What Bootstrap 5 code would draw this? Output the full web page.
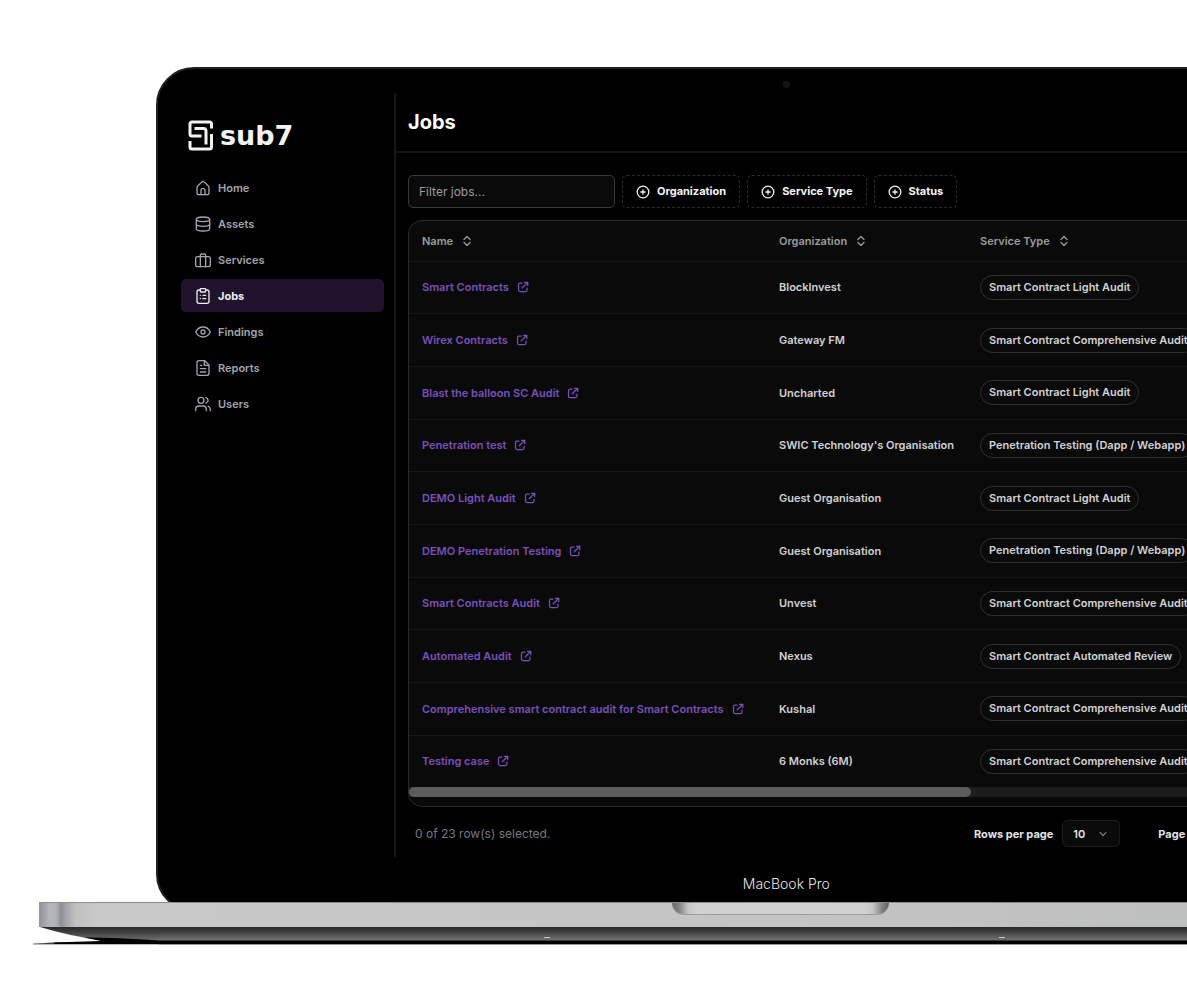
<!DOCTYPE html>
<html lang="en">
<head>
<meta charset="utf-8">
<meta name="viewport" content="width=device-width, initial-scale=1">
<title>sub7 – Jobs</title>
<link href="https://cdn.jsdelivr.net/npm/bootstrap@5.3.0/dist/css/bootstrap.min.css" rel="stylesheet">
<style>
  body { background: #fff; font-family: Inter, "Liberation Sans", sans-serif; font-size: 12px; line-height: 16px; color: #e4e4e7; overflow-x: hidden; }
  .stage { padding: 67px 0 39px 39px; overflow: hidden; }
  .laptop { width: 130.2%; }
  .screen { margin: 0 117px -10px; background: #000; border: 2px solid #1f2022; border-radius: 38px; }
  .bezel { height: 24px; padding-top: 12px; }
  .camera { width: 7px; height: 7px; border-radius: 50%; background: #14141b; }
  .app-shell { height: 764px; }
  .side { width: 238px; padding: 27px 10px 0 23px; border-right: 2px solid #151515; }
  .brand { gap: 7px; padding-left: 7px; margin-bottom: 20px; color: #f2f2f2; text-decoration: none; }
  .wordmark { font: 700 27px/31px "DejaVu Sans", sans-serif; }
  .side-nav { gap: 3px; }
  .side-nav .nav-link { display: flex; align-items: center; gap: 7px; height: 33px; padding: 0 14px; color: #a3a4ad; font-size: 11px; font-weight: 600; border-radius: 5px; }
  .side-nav .nav-link.active { background: #20132c; color: #ededf0; font-weight: 700; }
  .ico { fill: none; stroke: currentColor; stroke-width: 2; stroke-linecap: round; stroke-linejoin: round; flex: none; }
  .ico-thin { stroke-width: 1.3; }
  .ico-open { stroke-width: 2.5; }
  .top-bar { height: 60px; padding: 0 12px; border-bottom: 2px solid #151515; }
  .top-bar h1 { font-size: 20px; line-height: 28px; font-weight: 700; color: #fff; }
  .body-pad { padding: 22px 12px 0; }
  .tools { gap: 7px; margin-bottom: 12px; }
  .filter { width: 207px; height: 33px; font-size: 12px; padding: 0 10px; background: #0a0a0a; border: 1px solid #3a3a3a; border-radius: 5px; color: #e4e4e7; }
  .filter::placeholder { color: #9b9ba3; }
  .filter:focus { background: #0a0a0a; color: #fff; }
  .facet { display: flex; align-items: center; gap: 7px; height: 33px; padding: 0 13px; font-size: 11px; font-weight: 700; color: #f4f4f5; border: 1px dashed #2b2b2b; border-radius: 5px; }
  .facet:hover { color: #fff; background: #111; border-color: #444; }
  .panel { background: #0a0a0a; border: 1px solid #2b2b2b; border-radius: 14px; overflow: hidden; padding-bottom: 9px; }
  .jobs { table-layout: fixed; width: 100%; height: 566px; font-size: 11px; }
  .jobs .c-name { width: 357px; }
  .jobs .c-org { width: 202px; }
  .jobs th { height: 40px; padding: 0 13px; border-bottom: 1px solid #171717; }
  .jobs td { padding: 0 13px; font-weight: 600; color: #d2d2d4; border-bottom: 1px solid #171717; white-space: nowrap; }
  .jobs tr > :nth-child(3) { padding-left: 12px; }
  .jobs tr:last-child td { border-bottom: 0; }
  .jobs .sorter { font-weight: 600; font-size: 11px; line-height: 16px; color: #9c9c9c; gap: 8px; }
  .job-link { display: inline-flex; align-items: center; gap: 8px; color: #7b50bc; text-decoration: none; }
  .job-link:hover { color: #9a70dd; }
  .pill { display: inline-block; padding: 3px 8px; line-height: 17px; border: 1px solid #303030; border-radius: 13px; }
  .track { height: 10px; background: #1d1d1d; }
  .thumb { width: 562px; height: 10px; border-radius: 5px; background: #5c5c5c; }
  .foot { padding: 13px 7px 0; }
  .foot .picked { width: 559px; color: #777986; }
  .foot .strong { font-size: 11px; font-weight: 700; color: #e4e4e7; }
  .rows-pick { width: 58px; height: 27px; margin: 0 38px 0 9px; padding: 0 10px; font-size: 11px; font-weight: 600; line-height: 16px; color: #e4e4e7; background-color: #0a0a0a; border: 1px solid #1c1c1c; border-radius: 5px; background-position: right 10px center; background-size: 12px 12px;
    background-image: url("data:image/svg+xml,%3csvg xmlns='http://www.w3.org/2000/svg' viewBox='0 0 16 16'%3e%3cpath fill='none' stroke='%23999' stroke-width='1.4' stroke-linecap='round' d='m4 6 4 4 4-4'/%3e%3c/svg%3e"); }
  .chin { height: 53px; padding-top: 17px; font-size: 14px; line-height: 20px; font-weight: 300; color: #e6e6e6; }
  .deck { position: relative; height: 25px; padding-right: 12px; border-top: 1px solid #8b8c90; border-left: 1px solid #97989d;
    background: linear-gradient(90deg, #93959b 0, #b5b8bb 10px, #b0b2b6 16px, #8e9096 21px, #a5a7ab 27px, #c2c2c3 36px, #c8c8c8 60px, #c4c4c4 50%, #b9bbbb 100%); }
  .notch { width: 217px; height: 12px; border-radius: 0 0 16px 16px; border-bottom: 1px solid #9c9fa0; background: linear-gradient(90deg, #66676a 0, #808284 7px, #c4c6c4 16px, #d0d2cf 24px, #d0d2cf 193px, #c4c6c4 201px, #808284 210px, #5f6063 100%); }
  .under { height: 18px; }
  .under svg { width: 120px; height: 18px; overflow: visible; flex: none; }
  .under-fill { background: linear-gradient(#2a2a2c 0, #3a3a3b 4px, #717172 13px, #000 14px, #000 17px, #9a9a9a 17px, #9a9a9a 18px); }
  .foot-mark { width: 6px; height: 1px; margin-top: 10px; background: #c9c9c9; }
  .fm-a { margin-left: 385px; }
  .fm-b { margin-left: 449px; }
</style>
</head>
<body>
<svg width="0" height="0" class="position-absolute" aria-hidden="true">
  <symbol id="i-open" viewBox="0 0 24 24"><path d="M20 14v4a3 3 0 0 1-3 3H6a3 3 0 0 1-3-3V7a3 3 0 0 1 3-3h4"/><path d="M15 2.500h6.500V9M10.500 13.500 21 3"/></symbol>
  <symbol id="i-sort" viewBox="0 0 12 12"><path d="M3 4.500 6 1.500l3 3M3 7.500l3 3 3-3"/></symbol>
  <symbol id="i-plus" viewBox="0 0 14 14"><circle cx="7" cy="7" r="5.800"/><path d="M7 4.800v4.400M4.800 7h4.400"/></symbol>
</svg>
<div class="stage">
<div class="laptop">
  <div class="screen">
    <div class="bezel d-flex justify-content-center"><span class="camera"></span></div>
    <div class="app-shell d-flex">
      <aside class="side flex-shrink-0">
        <a class="brand d-flex align-items-center" href="#">
          <svg width="25" height="31" viewBox="0 0 25 31" fill="none" stroke="currentColor" stroke-width="3"><path d="M23.500 8.500V4q0-2-2-2H4Q2 2 2 4v10q0 2 2 2h9.500"/><path d="M6.500 8.500h9q2.500 0 2.500 2.500v13.500"/><path d="M23.500 14v13q0 2-2 2H4q-2 0-2-2v-6"/></svg>
          <span class="wordmark">sub7</span>
        </a>
        <nav class="side-nav nav flex-column">
          <a class="nav-link" href="#"><svg class="ico" width="16" height="16" viewBox="0 0 24 24"><path d="M5 8 10.500 2.800q1.500-1.300 3 0L19 8q2 1.600 2 4v7a3 3 0 0 1-3 3H6a3 3 0 0 1-3-3v-7q0-2.400 2-4z"/><path d="M9 22v-7a2 2 0 0 1 2-2h2a2 2 0 0 1 2 2v7"/></svg>Home</a>
          <a class="nav-link" href="#"><svg class="ico" width="16" height="16" viewBox="0 0 24 24"><ellipse cx="12" cy="5" rx="10" ry="3.500"/><path d="M2 5v14a10 3.500 0 0 0 20 0V5"/><path d="M2 12a10 3.500 0 0 0 20 0"/></svg>Assets</a>
          <a class="nav-link" href="#"><svg class="ico" width="16" height="16" viewBox="0 0 24 24"><rect x="1" y="7" width="22" height="15" rx="3"/><path d="M16 22V5a2 2 0 0 0-2-2h-4a2 2 0 0 0-2 2v17"/></svg>Services</a>
          <a class="nav-link active" aria-current="page" href="#"><svg class="ico" width="16" height="16" viewBox="0 0 24 24"><rect x="8" y="1" width="8" height="5" rx="1"/><path d="M16 3h2a3 3 0 0 1 3 3v14a3 3 0 0 1-3 3H6a3 3 0 0 1-3-3V6a3 3 0 0 1 3-3h2M12 11h4M12 16h4M8 11h.01M8 16h.01"/></svg>Jobs</a>
          <a class="nav-link" href="#"><svg class="ico" width="16" height="16" viewBox="0 0 24 24"><path d="M1 12s4-7.500 11-7.500S23 12 23 12s-4 7.500-11 7.500S1 12 1 12Z"/><circle cx="12" cy="12" r="3"/></svg>Findings</a>
          <a class="nav-link" href="#"><svg class="ico" width="16" height="16" viewBox="0 0 24 24"><path d="M14.500 1H6a3 3 0 0 0-3 3v16a3 3 0 0 0 3 3h12a3 3 0 0 0 3-3V7.500L14.500 1z"/><path d="M14 2v6h6M16 13H8M16 18H8M10 8H8"/></svg>Reports</a>
          <a class="nav-link" href="#"><svg class="ico" width="16" height="16" viewBox="0 0 24 24"><path d="M17 22v-2a5 5 0 0 0-5-5H6a5 5 0 0 0-5 5v2"/><circle cx="9" cy="6.500" r="4.500"/><path d="M23 22v-2a5 5 0 0 0-3.500-4.700M16.500 2.300a4.500 4.500 0 0 1 0 8.500"/></svg>Users</a>
        </nav>
      </aside>
      <main class="flex-grow-1">
        <header class="top-bar d-flex align-items-center"><h1 class="m-0">Jobs</h1></header>
        <div class="body-pad">
          <div class="tools d-flex">
            <input class="filter form-control" type="text" placeholder="Filter jobs..." aria-label="Filter jobs">
            <button class="facet btn" type="button"><svg class="ico ico-thin" width="14" height="14"><use href="#i-plus"/></svg>Organization</button>
            <button class="facet btn" type="button"><svg class="ico ico-thin" width="14" height="14"><use href="#i-plus"/></svg>Service Type</button>
            <button class="facet btn" type="button"><svg class="ico ico-thin" width="14" height="14"><use href="#i-plus"/></svg>Status</button>
          </div>
          <div class="panel">
            <table class="jobs">
              <thead><tr>
                <th class="c-name" scope="col"><button class="sorter btn p-0 border-0 d-flex align-items-center" type="button">Name<svg class="ico ico-thin" width="12" height="12"><use href="#i-sort"/></svg></button></th>
                <th class="c-org" scope="col"><button class="sorter btn p-0 border-0 d-flex align-items-center" type="button">Organization<svg class="ico ico-thin" width="12" height="12"><use href="#i-sort"/></svg></button></th>
                <th scope="col"><button class="sorter btn p-0 border-0 d-flex align-items-center" type="button">Service Type<svg class="ico ico-thin" width="12" height="12"><use href="#i-sort"/></svg></button></th>
              </tr></thead>
              <tbody>
                <tr><td><a class="job-link" href="#">Smart Contracts<svg class="ico ico-open" width="12" height="12"><use href="#i-open"/></svg></a></td><td>BlockInvest</td><td><span class="pill">Smart Contract Light Audit</span></td></tr>
                <tr><td><a class="job-link" href="#">Wirex Contracts<svg class="ico ico-open" width="12" height="12"><use href="#i-open"/></svg></a></td><td>Gateway FM</td><td><span class="pill">Smart Contract Comprehensive Audit</span></td></tr>
                <tr><td><a class="job-link" href="#">Blast the balloon SC Audit<svg class="ico ico-open" width="12" height="12"><use href="#i-open"/></svg></a></td><td>Uncharted</td><td><span class="pill">Smart Contract Light Audit</span></td></tr>
                <tr><td><a class="job-link" href="#">Penetration test<svg class="ico ico-open" width="12" height="12"><use href="#i-open"/></svg></a></td><td>SWIC Technology's Organisation</td><td><span class="pill">Penetration Testing (Dapp / Webapp)</span></td></tr>
                <tr><td><a class="job-link" href="#">DEMO Light Audit<svg class="ico ico-open" width="12" height="12"><use href="#i-open"/></svg></a></td><td>Guest Organisation</td><td><span class="pill">Smart Contract Light Audit</span></td></tr>
                <tr><td><a class="job-link" href="#">DEMO Penetration Testing<svg class="ico ico-open" width="12" height="12"><use href="#i-open"/></svg></a></td><td>Guest Organisation</td><td><span class="pill">Penetration Testing (Dapp / Webapp)</span></td></tr>
                <tr><td><a class="job-link" href="#">Smart Contracts Audit<svg class="ico ico-open" width="12" height="12"><use href="#i-open"/></svg></a></td><td>Unvest</td><td><span class="pill">Smart Contract Comprehensive Audit</span></td></tr>
                <tr><td><a class="job-link" href="#">Automated Audit<svg class="ico ico-open" width="12" height="12"><use href="#i-open"/></svg></a></td><td>Nexus</td><td><span class="pill">Smart Contract Automated Review</span></td></tr>
                <tr><td><a class="job-link" href="#">Comprehensive smart contract audit for Smart Contracts<svg class="ico ico-open" width="12" height="12"><use href="#i-open"/></svg></a></td><td>Kushal</td><td><span class="pill">Smart Contract Comprehensive Audit</span></td></tr>
                <tr><td><a class="job-link" href="#">Testing case<svg class="ico ico-open" width="12" height="12"><use href="#i-open"/></svg></a></td><td>6 Monks (6M)</td><td><span class="pill">Smart Contract Comprehensive Audit</span></td></tr>
              </tbody>
            </table>
            <div class="track"><div class="thumb"></div></div>
          </div>
          <div class="foot d-flex align-items-center">
            <span class="picked">0 of 23 row(s) selected.</span>
            <label class="strong" for="rows">Rows per page</label>
            <select id="rows" class="rows-pick form-select"><option>10</option><option>20</option><option>50</option></select>
            <span class="strong">Page</span>
          </div>
        </div>
      </main>
    </div>
    <div class="chin text-center">MacBook Pro</div>
  </div>
  <div class="deck d-flex justify-content-center"><span class="notch"></span></div>
  <div class="under d-flex">
    <svg viewBox="0 0 120 18" aria-hidden="true">
      <defs><linearGradient id="shade" x1="0" y1="0" x2="0" y2="1"><stop offset="0" stop-color="#2a2a2c"/><stop offset=".3" stop-color="#3a3a3b"/><stop offset="1" stop-color="#717172"/></linearGradient></defs>
      <path d="M1 0H121V14H66Q30 9 1 0Z" fill="url(#shade)"/>
      <path d="M45 10.500Q70 10 120 13.500V17H10L-6 16.500L22 15.200L62 14Z" fill="#000"/>
      <path d="M-6 16.500H120V17.500H-6Z" fill="#777"/>
      <path d="M15 15.500H120V17H15Z" fill="#000"/>
    </svg>
    <div class="under-fill flex-grow-1 d-flex"><span class="foot-mark fm-a"></span><span class="foot-mark fm-b"></span></div>
  </div>
</div>
</div>
<script src="https://cdn.jsdelivr.net/npm/bootstrap@5.3.0/dist/js/bootstrap.bundle.min.js"></script>
</body>
</html>
